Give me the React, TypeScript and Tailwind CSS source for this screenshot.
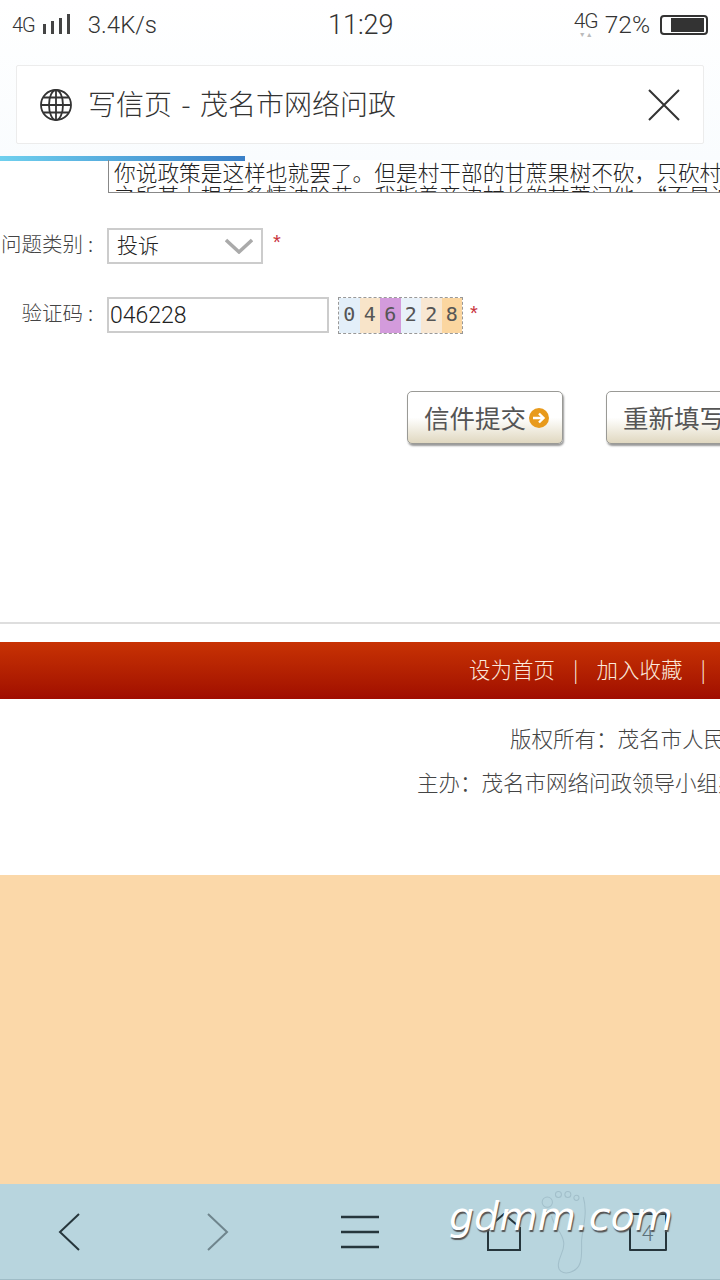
const cjk = "font-['Noto_Sans_CJK_SC','Noto_Sans',sans-serif]";

const StatusBar = () => (
  <div className="relative flex h-[50px] items-center font-['Roboto',sans-serif] font-light text-[#333]">
    <div className="flex w-[300px] items-center pl-3">
      <span className="text-[20px] tracking-[-1px]">4G</span>
      <svg width="30" height="22" viewBox="0 0 30 22" className="ml-[7px]">
        <rect x="1" y="10" width="3" height="10" fill="#444" />
        <rect x="9" y="7" width="3" height="13" fill="#444" />
        <rect x="17" y="4" width="3" height="16" fill="#444" />
        <rect x="25" y="0" width="3" height="20" fill="#444" />
      </svg>
      <span className="ml-4 text-[24px]">3.4K/s</span>
    </div>
    <span className="ml-[28px] text-[27px]">11:29</span>
    <div className="ml-auto flex items-center pr-3">
      <div className="relative flex flex-col items-center">
        <span className="text-[21px] leading-[20px] tracking-[-1px]">4G</span>
        <span className="text-[7px] leading-[8px] text-[#bbb]">▼▲</span>
      </div>
      <span className="ml-[7px] text-[24.500px]">72%</span>
      <div className="ml-[10px] flex h-[20px] w-[48px] items-center rounded-[4px] border-2 border-[#333] pl-[9px] pr-[2px]">
        <div className="h-[14px] w-full bg-[#333]" />
      </div>
    </div>
  </div>
);

const TitleCard = () => (
  <div className="mx-4 mt-[15px] flex h-[79px] items-center rounded-[2px] border border-[#ececec] bg-white pl-[23px] pr-[23px]">
    <svg width="32" height="32" viewBox="0 0 32 32" fill="none" stroke="#333" strokeWidth="1.8">
      <circle cx="16" cy="16" r="15" />
      <ellipse cx="16" cy="16" rx="7" ry="15" />
      <path d="M16 1v30M1 16h30M3.500 8.500h25M3.500 23.500h25" />
    </svg>
    <span className={`${cjk} ml-[16px] pb-[3px] text-[28px] font-light text-[#333] whitespace-nowrap`}>
      写信页<span className="inline-block w-[28px] text-center">-</span>茂名市网络问政
    </span>
    <svg width="32" height="32" viewBox="0 0 32 32" className="ml-auto" fill="none" stroke="#333" strokeWidth="2">
      <path d="M1 1l30 30M31 1L1 31" />
    </svg>
  </div>
);

const Footprint = () => (
  <svg width="60" height="86" viewBox="0 0 70 100" fill="none" stroke="#a2bfca" strokeWidth="1.2" className="absolute left-[537px] top-[6px]">
    <circle cx="12" cy="14" r="6" />
    <circle cx="25" cy="5" r="3.500" />
    <circle cx="36" cy="5" r="3.500" />
    <circle cx="46" cy="9" r="3" />
    <path d="M54 8c6 20-2 40-2 52 0 16 2 32-14 36-8 2-14-2-13-10 1-10 8-16 6-26-2-12-12-18-14-30" />
  </svg>
);

const BottomNav = () => (
  <div className="relative grid h-[96px] grid-cols-5 border-b border-[#9fbcc6] bg-[#b8d5de]">
    <div className="flex items-center justify-center pr-[6px]">
      <svg width="23" height="38" viewBox="0 0 23 38" fill="none" stroke="#26363c" strokeWidth="2">
        <path d="M21 1L2 19l19 18" />
      </svg>
    </div>
    <div className="flex items-center justify-center pl-[2px]">
      <svg width="23" height="38" viewBox="0 0 23 38" fill="none" stroke="#6f858d" strokeWidth="2">
        <path d="M2 1l19 18L2 37" />
      </svg>
    </div>
    <div className="flex items-center justify-center">
      <svg width="40" height="34" viewBox="0 0 40 34" fill="none" stroke="#26363c" strokeWidth="2.400">
        <path d="M1 2h38M1 17h38M1 32h38" />
      </svg>
    </div>
    <div className="flex items-center justify-center">
      <svg width="36" height="38" viewBox="0 0 36 38" fill="none" stroke="#26363c" strokeWidth="2">
        <path d="M2 14v23h32V14M5 12L18 1l13 11" />
      </svg>
    </div>
    <div className="flex items-center justify-center">
      <div className={`flex h-[38px] w-[38px] items-center justify-center rounded-[1px] border-2 border-[#26363c] text-[22px] font-light text-[#5d727a] ${cjk}`}>
        4
      </div>
    </div>
    <Footprint />
    <span className="absolute left-[449px] top-[6px] font-['DejaVu_Sans',sans-serif] text-[39.500px] italic leading-[52px] text-white [text-shadow:1px_2px_1px_#555]">
      gdmm.com
    </span>
  </div>
);

const Captcha = () => {
  const cells = [
    { c: "0", bg: "bg-[#e3eff9]" },
    { c: "4", bg: "bg-[#f8e4c9]" },
    { c: "6", bg: "bg-[#d39bdc]" },
    { c: "2", bg: "bg-[#e8f1f9]" },
    { c: "2", bg: "bg-[#f8e7d2]" },
    { c: "8", bg: "bg-[#fbd6a0]" },
  ];
  return (
    <div className="ml-[9px] flex h-[37px] w-[125px] border border-dashed border-[#999] font-['DejaVu_Sans_Mono',monospace] text-[20px] text-[#555]">
      {cells.map((cell, i) => (
        <span key={i} className={`flex flex-1 items-center justify-center pb-[3px] ${cell.bg}`}>
          {cell.c}
        </span>
      ))}
    </div>
  );
};

const FormButton = ({ label, icon }: { label: string; icon?: boolean }) => (
  <div className="flex h-[53px] w-[156px] shrink-0 items-center rounded-[5px] border border-[#9a9a96] bg-gradient-to-b from-white from-50% to-[#e0d8c0] pl-[16px] shadow-[1px_2px_2px_#999]">
    <span className={`${cjk} text-[25.500px] text-[#555] whitespace-nowrap`}>{label}</span>
    {icon && (
      <svg width="20" height="20" viewBox="0 0 20 20" className="ml-[3px]">
        <circle cx="10" cy="10" r="10" fill="#e89a1c" />
        <path d="M4 10h10M10 5.500l4.500 4.500-4.500 4.500" fill="none" stroke="#fff" strokeWidth="2.400" />
      </svg>
    )}
  </div>
);

const FieldLabel = ({ text }: { text: string }) => (
  <div className="flex w-[93px] shrink-0 justify-end pb-[5px] text-[20.500px] font-light text-[#444] whitespace-nowrap">
    <span>{text}</span>
    <span className="w-[10px] text-right">:</span>
  </div>
);

const App = () => {
  return (
    <div className={`${cjk} flex h-[1280px] w-[720px] flex-col overflow-hidden bg-white`}>
      <div className="h-[160px] shrink-0 bg-gradient-to-b from-white to-[#f9fcfe]">
        <StatusBar />
        <TitleCard />
        <div className="mt-[12px] h-[5px] w-[245px] bg-gradient-to-r from-[#6fd0ee] to-[#3a80c8]" />
      </div>

      <div className="ml-[108px] h-[33px] w-[640px] shrink-0 overflow-hidden border-b border-l border-[#888] pl-[5px] text-[21.700px] font-light leading-[23px] text-[#222] whitespace-nowrap">
        <div>你说政策是这样也就罢了。但是村干部的甘蔗果树不砍，只砍村民</div>
        <div>之所甚上根有多情油脸花。我指着旁边村长的甘蔗问他，“不是说</div>
      </div>

      <div className="mt-[35px] flex h-[36px] shrink-0 items-center">
        <FieldLabel text="问题类别" />
        <div className="ml-[14px] flex h-[36px] w-[156px] items-center border-2 border-[#ccc] pb-[3px] pl-2 pr-[8px]">
          <span className="text-[21px] font-light text-[#222]">投诉</span>
          <svg width="28" height="16" viewBox="0 0 28 16" className="ml-auto mt-[3px]" fill="none" stroke="#aaa" strokeWidth="3.500">
            <path d="M1 2l13 12L27 2" />
          </svg>
        </div>
        <span className="ml-[10px] -mt-[8px] font-['Liberation_Sans',sans-serif] text-[20px] text-[#c8323c]">*</span>
      </div>

      <div className="mt-[33px] flex h-[36px] shrink-0 items-center">
        <FieldLabel text="验证码" />
        <div className="ml-[14px] flex h-[36px] w-[222px] items-center border-2 border-[#ccc] pl-[1px] pt-[2px] font-['Roboto',sans-serif] text-[23px] font-light text-[#222]">
          046228
        </div>
        <Captcha />
        <span className="ml-[7px] pb-[5px] font-['Liberation_Sans',sans-serif] text-[20px] text-[#c8323c]">*</span>
      </div>

      <div className="ml-[407px] mt-[58px] flex shrink-0 gap-[43px]">
        <FormButton label="信件提交" icon />
        <FormButton label="重新填写" />
      </div>

      <div className="mt-[178px] h-[2px] shrink-0 bg-[#dedede]" />

      <div className="mt-[18px] flex h-[57px] shrink-0 items-center bg-gradient-to-b from-[#c83204] to-[#a00c00] pb-[3px] pl-[469px] text-[21.500px] font-light text-[#fbe9dc] whitespace-nowrap">
        <span>设为首页</span>
        <span className="ml-[18px]">|</span>
        <span className="ml-[18px]">加入收藏</span>
        <span className="ml-[18px]">|</span>
      </div>

      <div className="ml-[510px] mt-[23px] h-[31px] shrink-0 text-[21.500px] font-light leading-[31px] text-[#444] whitespace-nowrap">
        版权所有：茂名市人民政府
      </div>
      <div className="ml-[417px] mt-[13px] h-[31px] shrink-0 text-[21.500px] font-light leading-[31px] text-[#444] whitespace-nowrap">
        主办：茂名市网络问政领导小组办公室
      </div>

      <div className="mt-[78px] flex-1 bg-[#fbd8a9]" />
      <BottomNav />
    </div>
  );
};

export default App;
